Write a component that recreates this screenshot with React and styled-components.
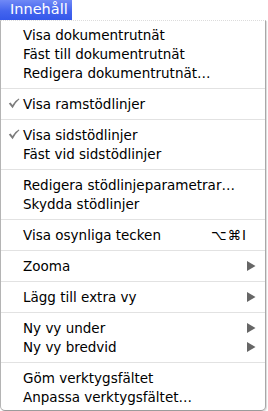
import React from 'react';
import styled, { createGlobalStyle } from 'styled-components';

const Global = createGlobalStyle`
  html, body {
    margin: 0;
    padding: 0;
    background: #ffffff;
  }
  body {
    font-family: "DejaVu Sans", "Liberation Sans", sans-serif;
  }
`;

const Page = styled.div`
  width: 268px;
  height: 411px;
  display: flex;
  flex-direction: column;
  overflow: hidden;
`;

const MenuBar = styled.div`
  height: 20px;
  display: flex;
`;

const MenuTitle = styled.div`
  width: 62px;
  padding-left: 10px;
  height: 20px;
  line-height: 19px;
  font-size: 14.5px;
  color: #ffffff;
  background: linear-gradient(#7089f6, #4465ee 55%, #3457ea);
`;

const Menu = styled.div`
  width: 264px;
  padding: 4px 0;
  background: #ffffff;
  border-left: 1px solid #b4b4b4;
  border-right: 1px solid #a8a8a8;
  border-bottom: 1px solid #9c9c9c;
  border-top: 1px dotted #dcdcdc;
  border-radius: 0 0 5px 5px;
  box-shadow: 1px 1px 1px rgba(0, 0, 0, 0.15);
`;

const Item = styled.div`
  height: 19px;
  display: flex;
  align-items: center;
  padding: 0 9px 0 0;
  font-size: 13.5px;
  color: #000000;
`;

const CheckCell = styled.span`
  width: 22px;
  height: 19px;
  display: flex;
  align-items: center;
  padding-left: 7px;
  box-sizing: border-box;
`;

const Label = styled.span`
  flex: 1;
  white-space: nowrap;
`;

const Shortcut = styled.span`
  margin-right: 9px;
  letter-spacing: 1px;
`;

const Separator = styled.div`
  height: 12px;
  display: flex;
  align-items: center;
  &::after {
    content: '';
    flex: 1;
    height: 1px;
    background: #e2e2e2;
  }
`;

const Check = () => (
  <svg width="12" height="11" viewBox="0 0 12 11">
    <path d="M0.8 5.6 L2.6 4.4 L4.4 7 Q7 2.6 10.8 0.6 L11.4 1.2 Q7.6 4.2 4.6 10.2 Z" fill="#7c7c7c" />
  </svg>
);

const Arrow = () => (
  <svg width="9" height="10" viewBox="0 0 9 10">
    <path d="M0 0 L8.5 5 L0 10 Z" fill="#666666" />
  </svg>
);

const groups = [
  [{ label: 'Visa dokumentrutnät' }, { label: 'Fäst till dokumentrutnät' }, { label: 'Redigera dokumentrutnät…' }],
  [{ label: 'Visa ramstödlinjer', checked: true }],
  [{ label: 'Visa sidstödlinjer', checked: true }, { label: 'Fäst vid sidstödlinjer' }],
  [{ label: 'Redigera stödlinjeparametrar…' }, { label: 'Skydda stödlinjer' }],
  [{ label: 'Visa osynliga tecken', shortcut: '⌥⌘I' }],
  [{ label: 'Zooma', sub: true }],
  [{ label: 'Lägg till extra vy', sub: true }],
  [{ label: 'Ny vy under', sub: true }, { label: 'Ny vy bredvid', sub: true }],
  [{ label: 'Göm verktygsfältet' }, { label: 'Anpassa verktygsfältet…' }],
];

export default function App() {
  return (
    <Page>
      <Global />
      <MenuBar>
        <MenuTitle>Innehåll</MenuTitle>
      </MenuBar>
      <Menu>
        {groups.map((group, gi) => (
          <React.Fragment key={gi}>
            {gi > 0 && <Separator />}
            {group.map((item) => (
              <Item key={item.label}>
                <CheckCell>{item.checked && <Check />}</CheckCell>
                <Label>{item.label}</Label>
                {item.shortcut && <Shortcut>{item.shortcut}</Shortcut>}
                {item.sub && <Arrow />}
              </Item>
            ))}
          </React.Fragment>
        ))}
      </Menu>
    </Page>
  );
}
